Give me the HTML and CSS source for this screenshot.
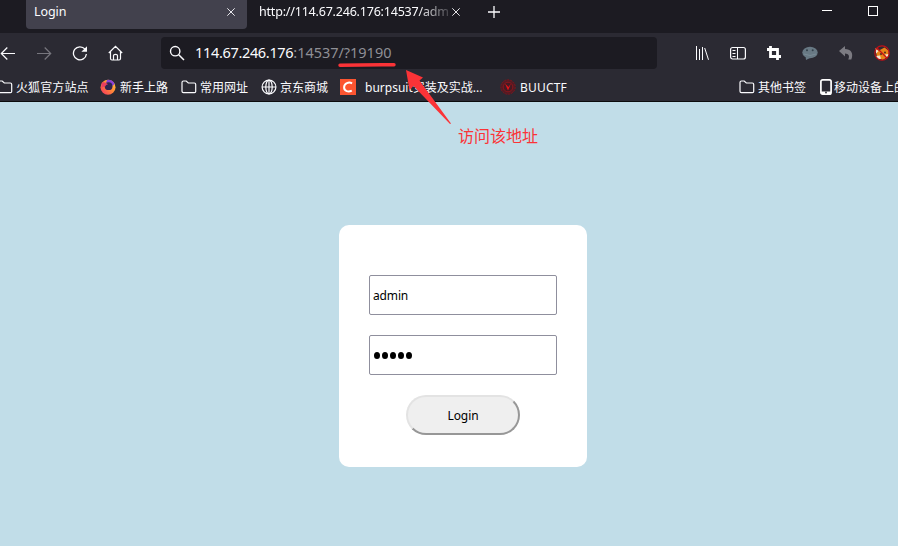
FILE: index.html
```html
<!DOCTYPE html>
<html lang="zh-CN">
<head>
<meta charset="utf-8">
<title>Login</title>
<link rel="stylesheet" href="styles.css">
</head>
<body>
<svg width="0" height="0" class="defs">
  <defs>
    <symbol id="folder" viewBox="0 0 16 16"><path d="M1 3.5Q1 2 2.5 2H5.2L7.3 4H13.3Q14.7 4 14.7 5.4V12.4Q14.7 13.6 13.5 13.6H2.4Q1 13.6 1 12.3Z" fill="none" stroke="currentColor" stroke-width="1.2"/></symbol>
    <symbol id="close" viewBox="0 0 8 8"><path d="M.3 .3L7.7 7.7M7.7 .3L.3 7.7" stroke="currentColor" stroke-width=".9"/></symbol>
  </defs>
</svg>
<header class="tabs">
  <div class="tab active"><span class="title">Login</span><svg class="x" width="8" height="8"><use href="#close"/></svg></div>
  <div class="tab"><span class="title fade"><span class="fit-tab">http://114.67.246.176:14537/adm</span></span><svg class="x" width="8" height="8"><use href="#close"/></svg></div>
  <svg class="plus" width="12" height="12" viewBox="0 0 12 12"><path d="M6 0V12M0 6H12" stroke="#fbfbfe" stroke-width="1.3"/></svg>
  <div class="window-buttons">
    <svg width="10" height="10"><path d="M0 4.5H10" stroke="#fff"/></svg>
    <svg width="10" height="10"><rect x=".5" y=".5" width="9" height="9" fill="none" stroke="#fff"/></svg>
  </div>
</header>
<nav class="toolbar">
  <div class="tools left">
    <span class="tool"><svg width="16" height="16" viewBox="0 0 16 16"><path d="M15 8.5H1.5M7.3 2.5L1.3 8.5L7.3 14.5" fill="none" stroke="#fbfbfe" stroke-width="1.2"/></svg></span>
    <span class="tool"><svg width="16" height="16" viewBox="0 0 16 16"><path d="M1 8.5H14.5M8.7 2.5L14.7 8.5L8.7 14.5" fill="none" stroke="#77767e" stroke-width="1.2"/></svg></span>
    <span class="tool"><svg width="16" height="16" viewBox="0 0 16 16"><path d="M13 4.2A6.5 6.5 0 1 0 14.4 9" fill="none" stroke="#fbfbfe" stroke-width="1.3"/><path d="M15 1.2V6.8H9.4Z" fill="#fbfbfe"/></svg></span>
    <span class="tool"><svg width="16" height="16" viewBox="0 0 16 16"><path d="M.8 8L7.5 1.3L14.2 8M2.5 6.5V13.5Q2.5 15 4 15H11Q12.5 15 12.5 13.5V6.5M5.5 15V10.5Q5.5 9.3 7.5 9.3Q9.5 9.3 9.5 10.5V15" fill="none" stroke="#fbfbfe" stroke-width="1.2"/></svg></span>
  </div>
  <div class="urlbar">
    <svg width="16" height="16" viewBox="0 0 16 16"><circle cx="6.2" cy="6.2" r="4.7" fill="none" stroke="#fbfbfe" stroke-width="1.4"/><path d="M9.7 9.7L15 15" stroke="#fbfbfe" stroke-width="1.5"/></svg>
    <span class="url"><b>114.67.246.176</b>:14537/?19190</span>
  </div>
  <div class="tools right">
    <span class="tool"><svg width="16" height="16" viewBox="0 0 16 16"><path d="M2.5 1V15M5.5 4V15M8.5 2V15M10.7 3L14.5 14.8" fill="none" stroke="#fbfbfe" stroke-width="1"/></svg></span>
    <span class="tool"><svg width="16" height="16" viewBox="0 0 16 16"><rect x=".6" y="2.5" width="14.8" height="11.5" rx="2" fill="none" stroke="#fbfbfe" stroke-width="1.2"/><path d="M7.5 2.5V14M2.5 5.5H5.5M2.5 8.5H5.5M2.5 11.5H5.5" stroke="#fbfbfe" stroke-width="1"/></svg></span>
    <span class="tool"><svg width="16" height="16" viewBox="0 0 16 16"><path d="M4.5 1V11.5H15M1 4.5H11.5V15" fill="none" stroke="#fff" stroke-width="2.8"/></svg></span>
    <span class="tool"><svg width="16" height="16" viewBox="0 0 16 16"><ellipse cx="8" cy="7.5" rx="7.7" ry="5.8" fill="#687984"/><path d="M3.5 11L4 15L8.5 12.7Z" fill="#687984"/><circle cx="5" cy="5.2" r="1" fill="#34424c"/><circle cx="10.7" cy="5.2" r="1" fill="#34424c"/><path d="M2 9Q8 12 14 9" fill="none" stroke="#788b96"/></svg></span>
    <span class="tool"><svg width="16" height="16" viewBox="0 0 16 16"><path d="M1 6L7 1V4C12.5 4 16 8 13.3 14.5H10.2C12 10.8 10.6 8.7 7 8.4V11.4Z" fill="#7c7b82"/></svg></span>
    <span class="tool"><svg width="16" height="16" viewBox="0 0 16 16"><path d="M1.2 3L5 5.5L10.5 2.5L15 6L14 11.5L8.7 15L3 12Z" fill="#e88318"/><path d="M1 3.5L4.5 6L2.3 8.6ZM2 11L6 10.5L7 13.7L4.4 14ZM11 9.5L15 9L12.7 12.5Z" fill="#f3e6d4"/><circle cx="7" cy="9" r=".9" fill="#3b2220"/><circle cx="11" cy="7.5" r=".9" fill="#3b2220"/><circle cx="8" cy="8" r="7.2" fill="none" stroke="#c30f17" stroke-width="1.2"/><path d="M3 3L13 13" stroke="#c30f17" stroke-width="1.2"/></svg></span>
  </div>
</nav>
<nav class="bookmarks">
  <span class="bm bm-first"><svg width="16" height="16"><use href="#folder"/></svg><span>火狐官方站点</span></span>
  <span class="bm bm-regular bm-firefox"><svg width="16" height="16" viewBox="0 0 16 16"><defs><linearGradient id="fire" x1="1" y1="0" x2="0" y2="1"><stop offset="0" stop-color="#ffd846"/><stop offset=".45" stop-color="#ff8b35"/><stop offset="1" stop-color="#f52c64"/></linearGradient></defs><circle cx="8" cy="8.3" r="7.5" fill="url(#fire)"/><path d="M7 1Q12 0 14.6 4.8L12.7 7Q10 2.5 6 4Z" fill="#8a40d8"/><circle cx="8.6" cy="7.2" r="3.9" fill="#2d2550"/><path d="M1.8 3.5Q5 2.5 8 5.2Q5.5 5.4 5.2 7.6Q3.5 7 1.5 9Z" fill="#e83d61"/></svg><span>新手上路</span></span>
  <span class="bm bm-regular"><svg width="16" height="16"><use href="#folder"/></svg><span>常用网址</span></span>
  <span class="bm bm-globe"><svg width="16" height="16" viewBox="0 0 16 16"><g fill="none" stroke="#fbfbfe" stroke-width="1.2"><circle cx="8" cy="8" r="6.9"/><ellipse cx="8" cy="8" rx="3.2" ry="6.9"/><path d="M1 8H15M8 1V15"/></g></svg><span>京东商城</span></span>
  <span class="bm bm-burp"><svg width="16" height="16" viewBox="0 0 16 16"><rect width="16" height="16" fill="#fc5531"/><path d="M12.1 4.3C8.8 2.7 4.3 4.1 4.1 8.3C4 12.5 8.6 13.1 11.8 11.6" fill="none" stroke="#fff" stroke-width="2"/></svg><span>burpsuit安装及实战...</span></span>
  <span class="bm bm-buu"><svg width="16" height="16" viewBox="0 0 16 16"><circle cx="8" cy="8" r="7.2" fill="#541b24" stroke="#80151c" stroke-dasharray="2 1"/><circle cx="8" cy="8" r="4.8" fill="#451a23" stroke="#98151b" stroke-width=".8"/><path d="M5 4.5L8 11.5L11 4.5L8.5 8Z" fill="#e21319"/></svg><span>BUUCTF</span></span>
  <span class="bm bm-other"><svg width="16" height="16"><use href="#folder"/></svg><span>其他书签</span></span>
  <span class="bm bm-mobile"><svg width="12" height="16" viewBox="0 0 12 16"><rect x=".9" y=".9" width="10.2" height="14.2" rx="1.7" fill="none" stroke="#fff" stroke-width="1.7"/><path d="M1 12.5H11V15H1Z" fill="#fff"/><circle cx="6" cy="13.5" r=".9" fill="#2b2a33"/></svg><span>移动设备上的</span></span>
</nav>
<main class="page">
  <form class="card">
    <input type="text" value="admin">
    <div class="password"><i></i><i></i><i></i><i></i><i></i></div>
    <button type="button">Login</button>
  </form>
</main>
<div class="note">访问该地址</div>
<svg class="annotation" width="898" height="546"><path d="M340 65.3Q366 64.6 394 64.8" fill="none" stroke="#fb3337" stroke-width="3.4" stroke-linecap="round"/><path d="M406 70L423 77.5L419.5 80.5L451 123.5L450 124L413.5 86L409.5 90Z" fill="#fb3337"/></svg>
</body>
</html>
```
FILE: styles.css
```css
* { box-sizing: border-box; }
body {
  margin: 0;
  width: 898px;
  height: 546px;
  overflow: hidden;
  background: #c1dde8;
  color: #fbfbfe;
  font: 12px "Noto Sans", "Noto Sans CJK SC", sans-serif;
}
svg { display: block; flex: none; }
.defs { position: absolute; }
.tabs { display: flex; height: 33px; background: #1c1b22; padding-left: 26px; }
.tab { display: flex; align-items: center; width: 221px; height: 29px; padding: 0 12px 6px 8px; border-radius: 0 0 4px 4px; }
.tab + .tab { margin-left: 4px; }
.active { background: #42414d; }
.title { flex: 1; white-space: nowrap; font-size: 12.5px; letter-spacing: -.1px; }
.fade { overflow: hidden; mask-image: linear-gradient(90deg, #000 83%, transparent 103%); }
.fit-tab { letter-spacing: -.2px; }
.tab + .tab .x { margin-left: 2px; }
.plus { margin: 6px 0 0 16px; }
.window-buttons { display: flex; gap: 36px; margin: 6px 20px 0 auto; }
.toolbar { display: flex; align-items: center; height: 40px; background: #2b2a33; }
.tools { display: flex; flex: none; }
.left { margin-left: -10px; width: 171px; }
.right { margin-left: 27px; }
.tool { display: flex; width: 36px; justify-content: center; }
.urlbar { display: flex; align-items: center; flex: none; width: 496px; height: 32px; gap: 10px; padding: 0 8px; border-radius: 4px; background: #1c1b22; }
.url { padding-bottom: 2px; color: #8f8f96; font-size: 14.5px; letter-spacing: -.03px; white-space: nowrap; }
.url b { color: #fbfbfe; font-weight: 400; letter-spacing: -.33px; }
.bookmarks { display: flex; height: 29px; border-bottom: 1px solid #0c0c0d; background: #2b2a33; white-space: nowrap; }
.bm { display: flex; flex: none; align-items: center; gap: 3px; }
.bm-first { width: 104px; margin-left: -3px; letter-spacing: .1px; }
.bm-regular { width: 80px; }
.bm-firefox svg { margin-left: -1px; margin-right: 1px; }
.bm-globe { width: 79px; }
.bm-burp { width: 160px; gap: 9px; }
.bm-buu { gap: 4px; letter-spacing: .2px; }
.bm-other { width: 81px; margin-left: auto; }
.bm-mobile { width: 78px; gap: 2px; }
.page { display: flex; justify-content: center; padding: 123px 0 0 28px; }
.card { display: flex; flex-direction: column; align-items: center; gap: 20px; width: 248px; height: 242px; padding-top: 50px; border-radius: 10px; background: #fff; }
.card input, .password { width: 188px; height: 40px; border: 1px solid #8f8f9d; border-radius: 2px; background: #fff; }
.card input { padding: 0 3px; color: #000; font: 12px "Noto Sans", sans-serif; letter-spacing: -.15px; }
.password { display: flex; align-items: center; gap: 2px; padding: 1px 0 0 4px; }
.password i { width: 6px; height: 7px; border-radius: 50%; background: #000; }
.card button { width: 114px; height: 40px; border: 2px solid; border-color: #e3e3e3 #979797 #979797 #e3e3e3; border-radius: 20px; background: #efefef; color: #000; font: 12px "Noto Sans", sans-serif; letter-spacing: -.1px; }
.note { position: absolute; left: 458px; top: 124px; color: #fb3337; font-size: 16px; line-height: 24px; }
.annotation { position: absolute; left: 0; top: 0; pointer-events: none; }
```
